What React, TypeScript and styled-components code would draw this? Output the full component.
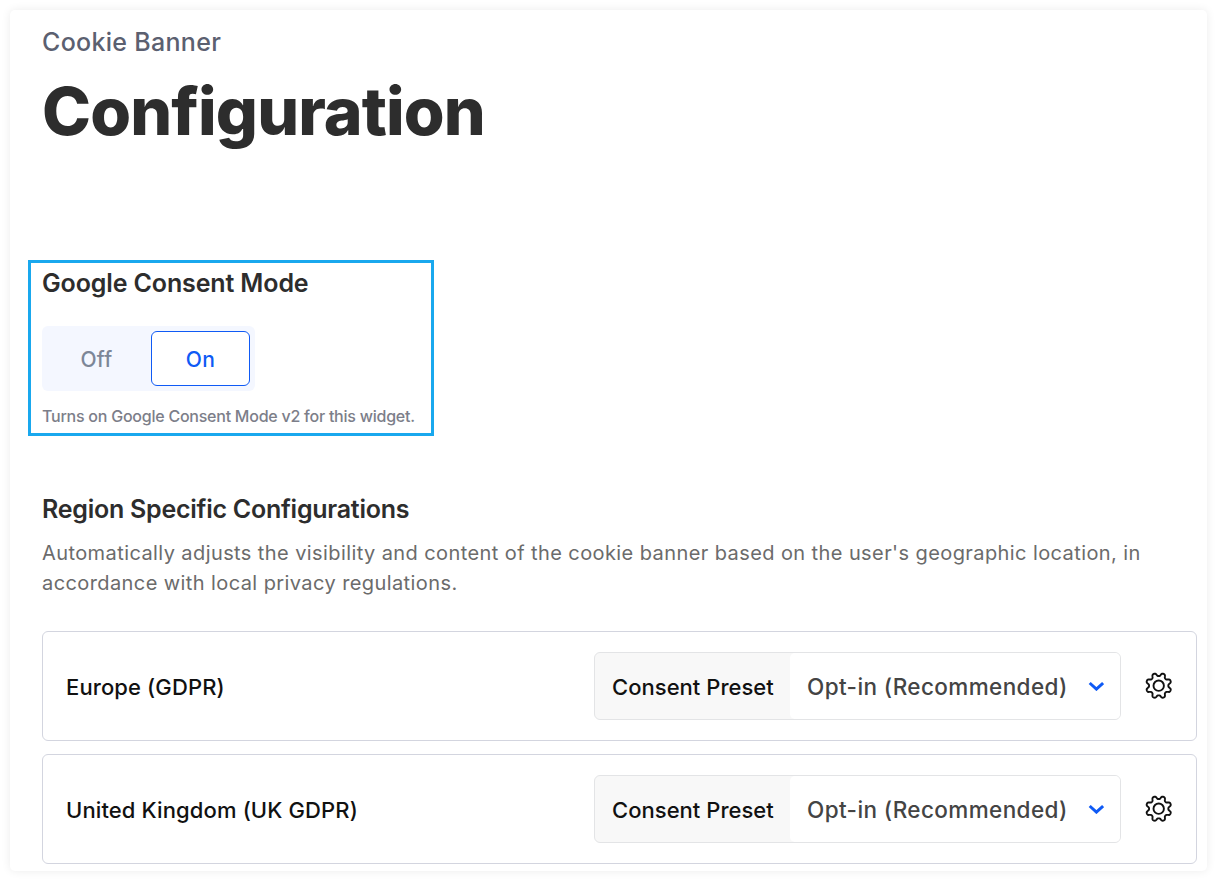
import React, { useState } from "react";
import styled, { createGlobalStyle, css } from "styled-components";

const regions = [
  { id: "eu", name: "Europe (GDPR)" },
  { id: "uk", name: "United Kingdom (UK GDPR)" },
];

// eight rounded teeth around the centre of a 30x30 box
const gearPath = () => {
  const steps = 160;
  let d = "";
  for (let i = 0; i < steps; i++) {
    const a = (i / steps) * Math.PI * 2;
    const wave = Math.cos(8 * (a - Math.PI / 8));
    const r = 11.2 + 1.7 * Math.tanh(1.6 * wave);
    const x = (14.7 + r * Math.cos(a)).toFixed(2);
    const y = (14.7 + r * Math.sin(a)).toFixed(2);
    d += `${i === 0 ? "M" : "L"}${x} ${y}`;
  }
  return d + "Z";
};

const GEAR = gearPath();

export default function App() {
  const [mode, setMode] = useState("on");

  return (
    <>
      <GlobalStyle />
      <Card>
        <Eyebrow>Cookie Banner</Eyebrow>
        <Title>Configuration</Title>

        <ConsentMode>
          <SectionTitle>Google Consent Mode</SectionTitle>
          <Toggle>
            <ToggleButton active={mode === "off"} onClick={() => setMode("off")}>
              Off
            </ToggleButton>
            <ToggleButton active={mode === "on"} onClick={() => setMode("on")}>
              On
            </ToggleButton>
          </Toggle>
          <Hint>Turns on Google Consent Mode v2 for this widget.</Hint>
        </ConsentMode>

        <RegionTitle>Region Specific Configurations</RegionTitle>
        <Description>
          Automatically adjusts the visibility and content of the cookie banner
          based on the user's geographic location, in
          <br />
          accordance with local privacy regulations.
        </Description>

        <RegionList>
          {regions.map((region) => (
            <RegionRow key={region.id}>
              <RegionName>{region.name}</RegionName>
              <Preset>
                <PresetLabel>Consent Preset</PresetLabel>
                <PresetValue>
                  <span>Opt-in (Recommended)</span>
                  <svg width='16' height='10' viewBox='0 0 16 10' fill='none'>
                    <path
                      d='M1.7 2L8.4 8.1L15.1 2'
                      stroke='#0f5af5'
                      strokeWidth='3'
                    />
                  </svg>
                </PresetValue>
              </Preset>
              <GearButton aria-label='Settings'>
                <svg width='30' height='30' viewBox='0 0 30 30' fill='none'>
                  <path d={GEAR} stroke='#111' strokeWidth='1.9' />
                  <circle
                    cx='14.7'
                    cy='14.7'
                    r='5.2'
                    stroke='#111'
                    strokeWidth='1.9'
                  />
                </svg>
              </GearButton>
            </RegionRow>
          ))}
        </RegionList>
      </Card>
    </>
  );
}

const GlobalStyle = createGlobalStyle`
  * {
    box-sizing: border-box;
  }

  body {
    margin: 0;
    padding: 10px;
    background-color: #fff;
    font-family: Inter, "Liberation Sans", sans-serif;
  }

  h1, h2, p {
    margin: 0;
  }

  button {
    padding: 0;
    border: none;
    background: none;
    font-family: inherit;
    cursor: pointer;
  }
`;

const Card = styled.main`
  display: flex;
  flex-direction: column;
  width: 1197px;
  height: 861px;
  padding: 16px 10px 0 32px;
  border-radius: 5px;
  background-color: #fff;
  box-shadow: 0 0 10px rgba(0, 0, 0, 0.08);
`;

const Eyebrow = styled.p`
  font-size: 25px;
  font-weight: 500;
  line-height: 32px;
  letter-spacing: 0.3px;
  color: #5b6070;
`;

const Title = styled.h1`
  margin-top: 11px;
  font-size: 66px;
  font-weight: 800;
  line-height: 84px;
  letter-spacing: -0.9px;
  color: #2d2d2d;
`;

const ConsentMode = styled.section`
  width: 406px;
  height: 176px;
  margin: 107px 0 0 -14px;
  padding: 4px 11px 0;
  border: 3px solid #19a8ee;
`;

const SectionTitle = styled.h2`
  font-size: 25px;
  font-weight: 600;
  line-height: 32px;
  letter-spacing: -0.13px;
  white-space: nowrap;
  color: #2d2d2d;
`;

const Toggle = styled.div`
  display: flex;
  width: 213px;
  height: 65px;
  margin-top: 27px;
  padding: 5px;
  border-radius: 6px;
  background-color: #f4f7ff;
`;

const ToggleButton = styled.button<{ active: boolean }>`
  width: 99px;
  height: 55px;
  padding-top: 2px;
  border-radius: 6px;
  font-size: 21px;
  font-weight: 500;
  letter-spacing: 0.3px;
  color: #7c8698;

  &:first-child {
    width: 104px;
    padding-right: 5px;
  }

  ${(props) =>
    props.active &&
    css`
      border: 1px solid #0f5af5;
      color: #0f5af5;
      background-color: #fff;
    `}
`;

const Hint = styled.p`
  margin-top: 15px;
  font-size: 16px;
  font-weight: 500;
  line-height: 20px;
  letter-spacing: -0.24px;
  white-space: nowrap;
  color: #7c7e89;
`;

const RegionTitle = styled(SectionTitle)`
  margin-top: 57px;
  letter-spacing: -0.25px;
`;

const Description = styled.p`
  margin-top: 13px;
  font-size: 20px;
  line-height: 30px;
  letter-spacing: 0.41px;
  white-space: nowrap;
  color: #6b6b6b;
`;

const RegionList = styled.div`
  display: flex;
  flex-direction: column;
  gap: 13px;
  margin-top: 33px;
`;

const RegionRow = styled.div`
  display: flex;
  align-items: center;
  height: 110px;
  padding: 0 22px 0 23px;
  border: 1px solid #d3d5df;
  border-radius: 6px;
`;

const RegionName = styled.span`
  flex: 1;
  padding-top: 1px;
  font-size: 22px;
  font-weight: 500;
  letter-spacing: 0.12px;
  white-space: nowrap;
  color: #111;
`;

const Preset = styled.div`
  display: flex;
  width: 527px;
  height: 68px;
  border: 1px solid #e3e4e6;
  border-radius: 6px;
  background-color: #f8f8f8;
`;

const PresetLabel = styled.span`
  width: 195px;
  padding-left: 17px;
  font-size: 22px;
  font-weight: 500;
  line-height: 68px;
  letter-spacing: 0.03px;
  white-space: nowrap;
  color: #111;
`;

const PresetValue = styled.div`
  display: flex;
  flex: 1;
  align-items: center;
  justify-content: space-between;
  padding: 0 16px 0 17px;
  border-radius: 5px;
  background-color: #fff;
  font-size: 22.5px;
  font-weight: 500;
  letter-spacing: 0.4px;
  white-space: nowrap;
  color: #444;
`;

const GearButton = styled.button`
  width: 30px;
  height: 30px;
  margin-left: 23px;

  svg {
    display: block;
  }
`;
